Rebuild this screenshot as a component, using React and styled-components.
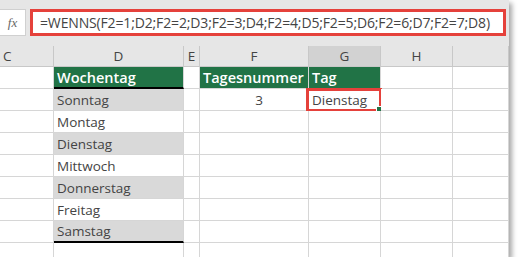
import React from "react";
import styled, { createGlobalStyle } from "styled-components";

const Global = createGlobalStyle`
  body {
    margin: 0;
    background: #ffffff;
    font-family: "Open Sans", "Noto Sans", sans-serif;
  }
`;

const Sheet = styled.div`
  width: 509px;
  height: 257px;
  background: #ffffff;
  box-shadow: 3px 3px 5px rgba(0, 0, 0, 0.35);
  overflow: hidden;
`;

const FormulaBar = styled.div`
  height: 46px;
  background: #e6e6e6;
  display: flex;
  align-items: flex-start;
  padding-top: 9px;
  box-sizing: border-box;
`;

const FxBox = styled.div`
  width: 26px;
  height: 27px;
  background: #ffffff;
  border: 1px solid #d0d0d0;
  border-left: none;
  box-sizing: border-box;
  display: flex;
  align-items: center;
  justify-content: center;
  font-family: "Liberation Serif", serif;
  font-style: italic;
  font-size: 13px;
  color: #666666;
`;

const FormulaInput = styled.div`
  margin-left: 4px;
  width: 476px;
  height: 27px;
  background: #ffffff;
  border: 3px solid #e5413b;
  box-sizing: border-box;
  display: flex;
  align-items: center;
  padding-left: 7px;
  font-size: 14px;
  color: #444444;
  white-space: nowrap;
  letter-spacing: -0.15px;
`;

const Grid = styled.div`
  display: grid;
  grid-template-columns: 54px 130px 16px 109px 72px 72px 56px;
  grid-auto-rows: 22px;
  grid-template-rows: 21px;
`;

const ColHead = styled.div`
  background: ${(p) => (p.$active ? "#d2d2d2" : "#e6e6e6")};
  border-right: 1px solid #c8c8c8;
  border-bottom: 1px solid #c8c8c8;
  box-sizing: border-box;
  display: flex;
  align-items: center;
  justify-content: ${(p) => (p.$left ? "flex-start" : "center")};
  padding-left: ${(p) => (p.$left ? "3px" : "0")};
  font-size: 13.5px;
  color: #444444;
`;

const Cell = styled.div`
  position: relative;
  box-sizing: border-box;
  border-right: 1px solid #d6d6d6;
  border-bottom: ${(p) =>
    p.$thick ? "2px solid #000000" : "1px solid #d6d6d6"};
  background: ${(p) =>
    p.$head ? "#217346" : p.$shade ? "#d9d9d9" : "#ffffff"};
  color: ${(p) => (p.$head ? "#ffffff" : "#444444")};
  font-weight: ${(p) => (p.$head ? 600 : 400)};
  font-size: ${(p) => (p.$head ? "14.5px" : "13.5px")};
  display: flex;
  align-items: center;
  justify-content: ${(p) => (p.$right ? "center" : "flex-start")};
  padding-left: ${(p) => (p.$right ? "10px" : "3px")};
  white-space: nowrap;
`;

const Selected = styled.div`
  position: absolute;
  left: -3px;
  top: -1px;
  right: -2px;
  bottom: -2px;
  border: 3px solid #e5413b;
  pointer-events: none;
`;

const Handle = styled.div`
  position: absolute;
  right: -4px;
  bottom: -4px;
  width: 5px;
  height: 5px;
  background: #217346;
  border: 1px solid #ffffff;
`;

const days = [
  "Sonntag",
  "Montag",
  "Dienstag",
  "Mittwoch",
  "Donnerstag",
  "Freitag",
  "Samstag",
];

export default function App() {
  const rows = [];
  days.forEach((d, i) => {
    const shade = i % 2 === 0;
    const last = i === days.length - 1;
    rows.push(
      <React.Fragment key={d}>
        <Cell />
        <Cell $shade={shade} $thick={last}>
          {d}
        </Cell>
        <Cell />
        <Cell $right>{i === 0 ? "3" : ""}</Cell>
        <Cell>
          {i === 0 && (
            <>
              Dienstag
              <Selected>
                <Handle />
              </Selected>
            </>
          )}
        </Cell>
        <Cell />
        <Cell />
      </React.Fragment>
    );
  });

  return (
    <>
      <Global />
      <Sheet>
        <FormulaBar>
          <FxBox>fx</FxBox>
          <FormulaInput>
            =WENNS(F2=1;D2;F2=2;D3;F2=3;D4;F2=4;D5;F2=5;D6;F2=6;D7;F2=7;D8)
          </FormulaInput>
        </FormulaBar>
        <Grid>
          <ColHead $left>C</ColHead>
          <ColHead>D</ColHead>
          <ColHead>E</ColHead>
          <ColHead>F</ColHead>
          <ColHead $active>G</ColHead>
          <ColHead>H</ColHead>
          <ColHead />

          <Cell />
          <Cell $head $thick>
            Wochentag
          </Cell>
          <Cell />
          <Cell $head>Tagesnummer</Cell>
          <Cell $head>Tag</Cell>
          <Cell />
          <Cell />

          {rows}

          <Cell />
          <Cell />
          <Cell />
          <Cell />
          <Cell />
          <Cell />
          <Cell />
        </Grid>
      </Sheet>
    </>
  );
}
